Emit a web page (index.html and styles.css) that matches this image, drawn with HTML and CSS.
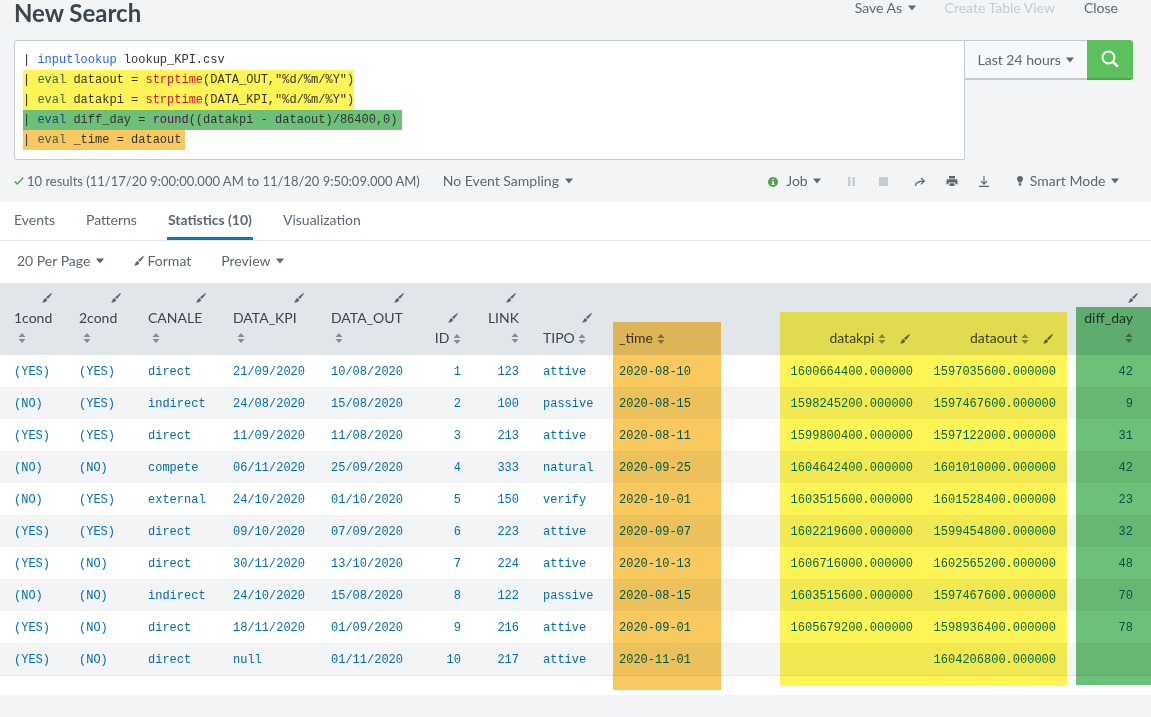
FILE: index.html
```html
<!DOCTYPE html>
<html lang="en">
<head>
  <meta charset="UTF-8">
  <title>New Search</title>
  <link rel="stylesheet" href="styles.css">
</head>
<body>

  <!-- shared icons -->
  <svg class="sprite" aria-hidden="true">
    <symbol id="caret" viewBox="0 0 8 6"><path d="M0 .5h8L4 5.500z"/></symbol>
    <symbol id="sort" viewBox="0 0 8 10"><path d="M4 0l3.500 4h-7zM4 10L.5 6h7z"/></symbol>
    <symbol id="brush" viewBox="0 0 10 10"><path d="M9 .3c.7-.4 1.200.2.8.8L6 6 4 4.300zM3.300 5l2 1.700C4.500 9 2.500 9.500 0 9.600 1.300 8.700 1.200 5.900 3.300 5z"/></symbol>
  </svg>

  <header class="page-header">
    <h1>New Search</h1>
    <nav class="actions">
      <button>Save As <svg class="caret"><use href="#caret"/></svg></button>
      <button disabled>Create Table View</button>
      <button>Close</button>
    </nav>
  </header>

  <div class="search-bar">
    <div class="editor" contenteditable="true" role="textbox" aria-multiline="true" aria-label="Search" spellcheck="false">
      <div class="line">| <span class="cmd">inputlookup</span> lookup_KPI.csv</div>
      <div class="line yellow">| <span class="cmd">eval</span> dataout = <span class="fn">strptime</span>(DATA_OUT,"%d/%m/%Y")</div>
      <div class="line yellow">| <span class="cmd">eval</span> datakpi = <span class="fn">strptime</span>(DATA_KPI,"%d/%m/%Y")</div>
      <div class="line green">| <span class="cmd">eval</span> diff_day = <span class="fn">round</span>((datakpi - dataout)/86400,0)</div>
      <div class="line orange">| <span class="cmd">eval</span> _time = dataout</div>
    </div>
    <button class="time-range">Last 24 hours <svg class="caret"><use href="#caret"/></svg></button>
    <button class="search-btn" aria-label="Run search">
      <svg class="outline" width="18" height="18" viewBox="0 0 18 18"><circle cx="7.500" cy="7.500" r="6" stroke-width="1.900"/><path d="M12 12l4.800 4.500" stroke-width="2.600"/></svg>
    </button>
  </div>

  <div class="status">
    <svg class="check outline" width="10" height="8" viewBox="0 0 10 8"><path d="M.7 4.500L3.300 7 9.300.800" stroke-width="1.400"/></svg>
    <span class="results">10 results (11/17/20 9:00:00.000 AM to 11/18/20 9:50:09.000 AM)</span>
    <button class="sampling">No Event Sampling <svg class="caret"><use href="#caret"/></svg></button>

    <div class="job">
      <button>
        <svg class="info" width="10" height="10" viewBox="0 0 10 10"><circle cx="5" cy="5" r="5" fill="#53a051"/><path d="M4.300 1.800h1.500v1.300H4.300zM3.700 4.200h2.100v2.900h.7v.9h-3v-.9h.8V5h-.6z" fill="#fff"/></svg>
        Job <svg class="caret"><use href="#caret"/></svg>
      </button>
    </div>
    <div class="job-control">
      <button disabled aria-label="Pause"><svg width="9" height="9" viewBox="0 0 9 9"><path d="M1 0h2.500v9H1zM5.500 0H8v9H5.500z"/></svg></button>
      <button disabled aria-label="Stop"><svg width="9" height="9" viewBox="0 0 9 9"><path d="M0 0h9v9H0z"/></svg></button>
    </div>
    <div class="job-control">
      <button aria-label="Share"><svg class="outline" width="12" height="12" viewBox="0 0 12 12"><path d="M1.500 11C1.600 7.500 4 6.200 10 6.200M7 3l3.300 3.200L7 9.400" stroke-width="1.300"/></svg></button>
      <button aria-label="Print"><svg width="12" height="12" viewBox="0 0 12 12"><path d="M3 1h6v2.500H3zM1.500 4.200h9q1 0 1 1v4H9.500V7.500h-7v1.700h-2v-4q0-1 1-1zM3.500 8.300h5V11h-5z"/></svg></button>
      <button aria-label="Export"><svg class="outline" width="12" height="12" viewBox="0 0 12 12"><path d="M6 1v8M3 6.200l3 3 3-3M1 11.400h10" stroke-width="1.200"/></svg></button>
    </div>
    <button class="mode"><svg class="bulb" width="8" height="10" viewBox="0 0 8 10"><path d="M4 0a3 3 0 0 1 3 3c0 1.500-1.400 2-1.500 3.500h-3C2.400 5 1 4.500 1 3a3 3 0 0 1 3-3zM2.700 7.200h2.600V9L4 10 2.700 9z"/></svg> Smart Mode <svg class="caret"><use href="#caret"/></svg></button>
  </div>

  <nav class="tabs">
    <a href="#">Events</a>
    <a href="#">Patterns</a>
    <a href="#" class="active">Statistics (10)</a>
    <a href="#">Visualization</a>
  </nav>

  <main class="results-panel">
    <div class="toolbar">
      <button>20 Per Page <svg class="caret"><use href="#caret"/></svg></button>
      <button><svg class="brush"><use href="#brush"/></svg> Format</button>
      <button>Preview <svg class="caret"><use href="#caret"/></svg></button>
    </div>

    <div class="table-wrap">
      <table>
        <colgroup>
          <col class="w-cond1"><col class="w-cond2"><col class="w-canale"><col class="w-date"><col class="w-date2">
          <col class="w-id"><col class="w-link"><col class="w-tipo"><col><col class="w-num"><col class="w-num"><col class="w-diff">
        </colgroup>
        <thead>
          <tr>
            <th class="first stack"><svg class="brush"><use href="#brush"/></svg><span>1cond</span><svg class="sort"><use href="#sort"/></svg></th>
            <th class="stack"><svg class="brush"><use href="#brush"/></svg><span>2cond</span><svg class="sort"><use href="#sort"/></svg></th>
            <th class="stack"><svg class="brush"><use href="#brush"/></svg><span>CANALE</span><svg class="sort"><use href="#sort"/></svg></th>
            <th class="stack"><svg class="brush"><use href="#brush"/></svg><span>DATA_KPI</span><svg class="sort"><use href="#sort"/></svg></th>
            <th class="stack"><svg class="brush"><use href="#brush"/></svg><span>DATA_OUT</span><svg class="sort"><use href="#sort"/></svg></th>
            <th class="num above"><svg class="brush"><use href="#brush"/></svg>ID <svg class="sort"><use href="#sort"/></svg></th>
            <th class="num stack"><svg class="brush"><use href="#brush"/></svg><span>LINK</span><svg class="sort"><use href="#sort"/></svg></th>
            <th class="above"><svg class="brush"><use href="#brush"/></svg>TIPO <svg class="sort"><use href="#sort"/></svg></th>
            <th>_time <svg class="sort"><use href="#sort"/></svg></th>
            <th class="num">datakpi <svg class="sort"><use href="#sort"/></svg><svg class="brush"><use href="#brush"/></svg></th>
            <th class="num">dataout <svg class="sort"><use href="#sort"/></svg><svg class="brush"><use href="#brush"/></svg></th>
            <th class="num stack last"><svg class="brush"><use href="#brush"/></svg><span>diff_day</span><svg class="sort"><use href="#sort"/></svg></th>
          </tr>
        </thead>
        <tbody>
          <tr><td class="first">(YES)</td><td>(YES)</td><td>direct</td><td>21/09/2020</td><td>10/08/2020</td><td class="num">1</td><td class="num">123</td><td>attive</td><td>2020-08-10</td><td class="num">1600664400.000000</td><td class="num">1597035600.000000</td><td class="num last">42</td></tr>
          <tr><td class="first">(NO)</td><td>(YES)</td><td>indirect</td><td>24/08/2020</td><td>15/08/2020</td><td class="num">2</td><td class="num">100</td><td>passive</td><td>2020-08-15</td><td class="num">1598245200.000000</td><td class="num">1597467600.000000</td><td class="num last">9</td></tr>
          <tr><td class="first">(YES)</td><td>(YES)</td><td>direct</td><td>11/09/2020</td><td>11/08/2020</td><td class="num">3</td><td class="num">213</td><td>attive</td><td>2020-08-11</td><td class="num">1599800400.000000</td><td class="num">1597122000.000000</td><td class="num last">31</td></tr>
          <tr><td class="first">(NO)</td><td>(NO)</td><td>compete</td><td>06/11/2020</td><td>25/09/2020</td><td class="num">4</td><td class="num">333</td><td>natural</td><td>2020-09-25</td><td class="num">1604642400.000000</td><td class="num">1601010000.000000</td><td class="num last">42</td></tr>
          <tr><td class="first">(NO)</td><td>(YES)</td><td>external</td><td>24/10/2020</td><td>01/10/2020</td><td class="num">5</td><td class="num">150</td><td>verify</td><td>2020-10-01</td><td class="num">1603515600.000000</td><td class="num">1601528400.000000</td><td class="num last">23</td></tr>
          <tr><td class="first">(YES)</td><td>(YES)</td><td>direct</td><td>09/10/2020</td><td>07/09/2020</td><td class="num">6</td><td class="num">223</td><td>attive</td><td>2020-09-07</td><td class="num">1602219600.000000</td><td class="num">1599454800.000000</td><td class="num last">32</td></tr>
          <tr><td class="first">(YES)</td><td>(NO)</td><td>direct</td><td>30/11/2020</td><td>13/10/2020</td><td class="num">7</td><td class="num">224</td><td>attive</td><td>2020-10-13</td><td class="num">1606716000.000000</td><td class="num">1602565200.000000</td><td class="num last">48</td></tr>
          <tr><td class="first">(NO)</td><td>(NO)</td><td>indirect</td><td>24/10/2020</td><td>15/08/2020</td><td class="num">8</td><td class="num">122</td><td>passive</td><td>2020-08-15</td><td class="num">1603515600.000000</td><td class="num">1597467600.000000</td><td class="num last">70</td></tr>
          <tr><td class="first">(YES)</td><td>(NO)</td><td>direct</td><td>18/11/2020</td><td>01/09/2020</td><td class="num">9</td><td class="num">216</td><td>attive</td><td>2020-09-01</td><td class="num">1605679200.000000</td><td class="num">1598936400.000000</td><td class="num last">78</td></tr>
          <tr><td class="first">(YES)</td><td>(NO)</td><td>direct</td><td>null</td><td>01/11/2020</td><td class="num">10</td><td class="num">217</td><td>attive</td><td>2020-11-01</td><td class="num"></td><td class="num">1604206800.000000</td><td class="num last"></td></tr>
        </tbody>
      </table>

      <!-- marker highlights over the computed columns -->
      <div class="marker marker-time"></div>
      <div class="marker marker-dates"></div>
      <div class="marker marker-diff"></div>
    </div>
  </main>

</body>
</html>
```

FILE: styles.css
```css
* {
  box-sizing: border-box;
}

body {
  margin: 0;
  background-color: #f2f4f5;
  color: #5c6773;
  font-family: Lato, "Liberation Sans", sans-serif;
  font-size: 14px;
  line-height: 20px;
}

button {
  padding: 0;
  border: none;
  background: none;
  color: inherit;
  font: inherit;
  white-space: nowrap;
  cursor: pointer;
}

button:disabled {
  color: #c3cbd4;
  cursor: default;
}

svg {
  fill: currentColor;
}

.outline {
  fill: none;
  stroke: currentColor;
}

.sprite {
  display: none;
}

.caret {
  width: 8px;
  height: 6px;
  margin-left: 2px;
  vertical-align: 2px;
}

.brush {
  width: 10px;
  height: 10px;
}

.sort {
  width: 8px;
  height: 10px;
  color: #818d99;
}

/* header */

.page-header {
  display: flex;
  justify-content: space-between;
  align-items: flex-start;
  height: 40px;
  padding: 0 33px 0 14px;
}

h1 {
  margin: 0;
  color: #3c444d;
  font-size: 24px;
  line-height: 26px;
  font-weight: bold;
}

.actions {
  display: flex;
  gap: 29px;
  line-height: 16px;
}

/* search bar */

.search-bar {
  display: flex;
  align-items: flex-start;
  padding: 0 18px 0 14px;
}

.editor {
  flex: 1;
  min-height: 120px;
  padding: 9px 8px;
  border: 1px solid #c3cbd4;
  border-radius: 3px 0 0 3px;
  background-color: #fff;
  color: #333;
  font-family: "Liberation Mono", monospace;
  font-size: 12px;
  outline: none;
}

.line {
  width: fit-content;
  white-space: pre;
}

.cmd {
  color: #2662fc;
}

.fn {
  color: #d9103f;
}

.yellow {
  background-color: #fff455;
}

.green {
  padding-right: 4px;
  background-color: #6cc077;
}

.orange {
  padding-right: 4px;
  background-color: #f9c95f;
}

.yellow .cmd {
  color: #336b55;
}

.green .cmd {
  color: #164a75;
}

.orange .cmd {
  color: #4b5f52;
}

.green .fn {
  color: #5c0c50;
}

.time-range {
  width: 122px;
  height: 40px;
  border-top: 1px solid #c3cbd4;
  border-bottom: 2px solid #c3cbd4;
  background-color: #f7f8fa;
}

.search-btn {
  display: flex;
  align-items: center;
  justify-content: center;
  width: 46px;
  height: 40px;
  border-bottom: 2px solid #4fa54f;
  border-radius: 0 3px 3px 0;
  background-color: #5cc05c;
  color: #fff;
}

/* job status */

.status {
  display: flex;
  align-items: center;
  height: 42px;
  padding: 0 32px 0 14px;
}

.check {
  color: #53a051;
}

.results {
  margin-left: 3px;
  font-size: 13px;
}

.sampling {
  margin-left: 23px;
}

.job {
  margin-left: auto;
}

.info {
  margin-right: 5px;
  vertical-align: -1px;
}

.job-control {
  display: flex;
  margin-left: 14px;
}

.job-control + .job-control {
  margin-left: 5px;
}

.job-control button {
  display: flex;
  align-items: center;
  justify-content: center;
  width: 32px;
  height: 20px;
}

.mode {
  margin-left: 16px;
}

.bulb {
  margin-right: 2px;
}

/* tabs */

.tabs {
  display: flex;
  gap: 29px;
  padding: 0 13px;
  border-bottom: 1px solid #e1e6eb;
  background-color: #fff;
}

.tabs a {
  padding: 8px 1px 7px;
  border-bottom: 3px solid transparent;
  color: #5c6773;
  text-decoration: none;
}

.tabs .active {
  border-color: #0877be;
  font-weight: bold;
}

/* results */

.results-panel {
  padding-bottom: 19px;
  background-color: #fff;
}

.toolbar {
  display: flex;
  gap: 30px;
  height: 42px;
  padding: 0 17px 2px;
}

.table-wrap {
  position: relative;
}

table {
  width: 100%;
  border-collapse: separate;
  border-spacing: 0;
  border-bottom: 1px solid #e1e6eb;
  table-layout: fixed;
}

.w-cond1 { width: 67px; }
.w-cond2 { width: 69px; }
.w-canale { width: 85px; }
.w-date { width: 98px; }
.w-date2 { width: 100px; }
.w-id { width: 54px; }
.w-link { width: 58px; }
.w-tipo { width: 76px; }
.w-num { width: 143px; }
.w-diff { width: 83px; }

th,
td {
  padding: 5px 12px 7px;
  text-align: left;
  white-space: nowrap;
}

th {
  background-color: #e1e6eb;
  color: #3c444d;
  font-weight: normal;
  vertical-align: bottom;
}

td {
  height: 32px;
  padding: 7px 12px 5px;
  color: #006eaa;
  font-family: "Liberation Mono", monospace;
  font-size: 12px;
}

tbody tr:nth-child(even) {
  background-color: #f2f4f5;
}

.first {
  padding-left: 14px;
}

.num {
  padding-left: 6px;
  text-align: right;
}

.last {
  padding-right: 18px;
}

th span {
  display: block;
}

th .sort {
  vertical-align: -1px;
}

th .brush {
  margin: 0 3px 0 14px;
  color: #5c6773;
  vertical-align: -1px;
}

.stack .brush,
.above .brush {
  display: block;
  margin: 5px 3px 5px auto;
}

.stack .sort {
  display: block;
  margin: 5px 4px;
}

.num.stack .sort {
  margin: 5px 0 5px auto;
}

.last.stack .brush {
  margin-right: -5px;
}

.marker {
  position: absolute;
  mix-blend-mode: multiply;
  pointer-events: none;
}

.marker-time {
  top: 39px;
  left: 613px;
  width: 108px;
  height: 368px;
  background-color: #f9c95f;
}

.marker-dates {
  top: 29px;
  right: 84px;
  width: 287px;
  height: 374px;
  background-color: #fff455;
}

.marker-diff {
  top: 24px;
  right: 0;
  width: 75px;
  height: 378px;
  background-color: #6cc077;
}
```
